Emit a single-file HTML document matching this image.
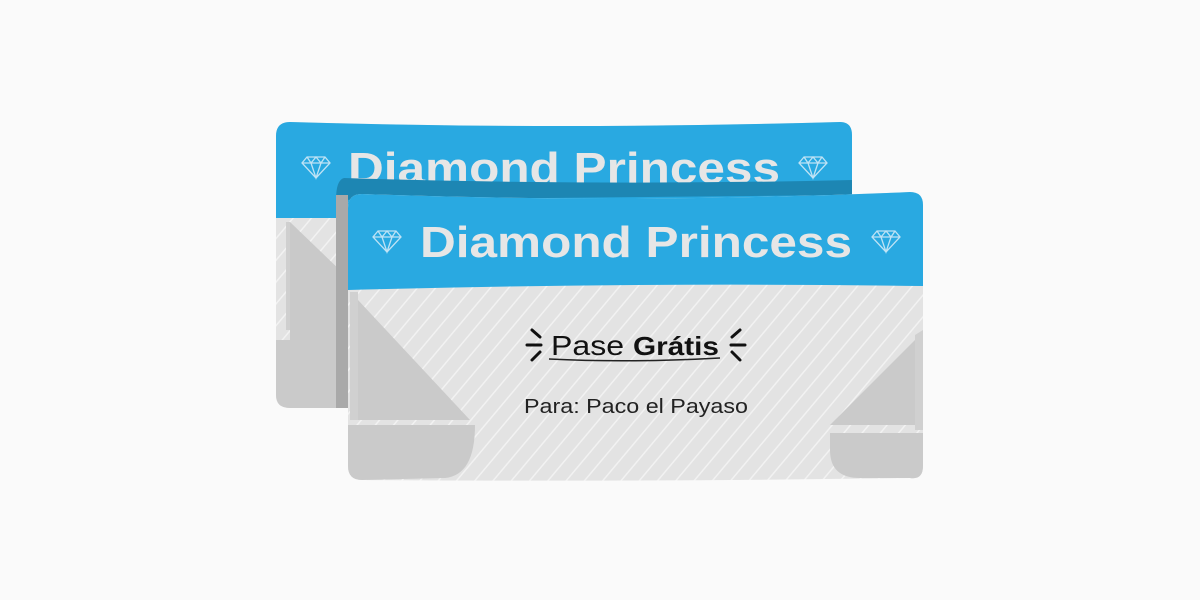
<!DOCTYPE html>
<html><head><meta charset="utf-8"><style>
html,body{margin:0;padding:0;background:#fafafa;width:1200px;height:600px;overflow:hidden}
</style></head><body>
<svg width="1200" height="600" viewBox="0 0 1200 600" xmlns="http://www.w3.org/2000/svg">
<defs>
<pattern id="st" width="14" height="14" patternUnits="userSpaceOnUse" patternTransform="rotate(40)">
<rect width="14" height="14" fill="#e3e3e3"/><rect width="1.5" height="14" fill="#f2f2f2"/>
</pattern>
<g id="dia" fill="none" stroke="#bfe3f5" stroke-width="1.3">
<path d="M-9,-7 L9,-7 L14,-1 L0,14 L-14,-1 Z M-14,-1 L14,-1 M-9,-7 L-5,-1 L0,-7 L5,-1 L9,-7 M-5,-1 L0,14 L5,-1"/>
</g>
</defs>
<!-- back card -->
<path d="M290,122 Q560,130 840,122 Q852,122 852,135 L852,408 L290,408 Q276,408 276,395 L276,136 Q276,122 290,122Z" fill="url(#st)"/>
<path d="M276,136 Q276,122 290,122 Q560,130 840,122 Q852,122 852,135 L852,218 L276,218 Z" fill="#29a9e1"/>
<path d="M286,222 L290,222 L290,330 L286,330Z" fill="#cfcfcf"/>
<path d="M290,222 L345,275 L345,380 L290,380 Z" fill="#c9c9c9"/>
<path d="M276,340 L345,340 L345,408 L290,408 Q276,408 276,395Z" fill="#cacaca"/>
<use href="#dia" x="316" y="164"/>
<use href="#dia" x="813" y="164"/>
<text x="348" y="183" font-family="Liberation Sans, sans-serif" font-weight="bold" font-size="44" fill="#e6e6e6" textLength="432" lengthAdjust="spacingAndGlyphs">Diamond Princess</text>
<!-- shadow -->
<path d="M344,178 Q600,186 852,180 L852,195 L336,200 Q336,180 344,178Z" fill="#1d86b3"/>
<path d="M336,195 L348,195 L348,408 L336,408Z" fill="#a9a9a9"/>
<!-- front card -->
<path d="M362,194 Q640,204 910,192 Q923,192 923,205 L923,466 Q923,480 910,478 Q640,482 362,480 Q348,480 348,466 L348,208 Q348,194 362,194Z" fill="url(#st)"/>
<path d="M350,292 L358,292 L358,420 L350,420Z" fill="#d0d0d0"/>
<path d="M358,300 L470,420 L358,420 Z" fill="#cacaca"/>
<path d="M348,425 L475,425 Q475,475 445,478 L362,480 Q348,480 348,466Z" fill="#cacaca"/>
<path d="M915,340 L915,425 L830,425 Z" fill="#cacaca"/>
<path d="M915,335 L923,330 L923,430 L915,430Z" fill="#d0d0d0"/>
<path d="M830,433 L923,433 L923,466 Q923,480 910,478 L860,478 Q830,478 830,450Z" fill="#cacaca"/>
<path d="M348,208 Q348,194 362,194 Q640,204 910,192 Q923,192 923,205 L923,286 Q640,282 348,290 Z" fill="#29a9e1"/>
<use href="#dia" x="387" y="238"/>
<use href="#dia" x="886" y="238"/>
<text x="420" y="257" font-family="Liberation Sans, sans-serif" font-weight="bold" font-size="44" fill="#e6e6e6" textLength="432" lengthAdjust="spacingAndGlyphs">Diamond Princess</text>
<!-- Pase Gratis -->
<text x="551" y="355" font-family="Liberation Sans, sans-serif" font-size="28" fill="#111" textLength="168" lengthAdjust="spacingAndGlyphs">Pase <tspan font-weight="bold" font-size="26">Grátis</tspan></text>
<path d="M549,359 Q630,363 720,358" stroke="#222" stroke-width="1.5" fill="none"/>
<g stroke="#111" stroke-width="3" stroke-linecap="round">
<path d="M532,330 L540,337 M527,345 L541,345 M532,360 L540,352"/>
<path d="M740,330 L732,337 M745,345 L731,345 M740,360 L732,352"/>
</g>
<text x="524" y="413" font-family="Liberation Sans, sans-serif" font-size="20" fill="#222" textLength="224" lengthAdjust="spacingAndGlyphs">Para: Paco el Payaso</text>
</svg>
</body></html>
